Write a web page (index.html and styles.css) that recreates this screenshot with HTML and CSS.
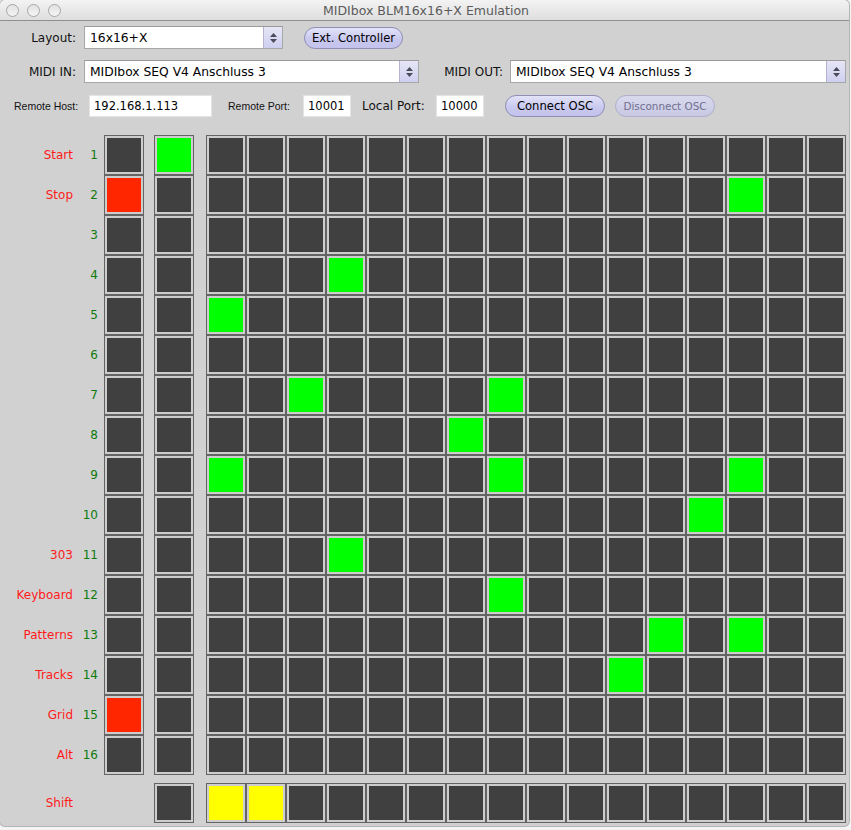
FILE: index.html
```html
<!DOCTYPE html>
<html>
<head>
<meta charset="utf-8">
<title>MIDIbox BLM16x16+X Emulation</title>
<link rel="stylesheet" href="styles.css">
</head>
<body>
<div class="window">
  <div class="titlebar">
    <div class="lights"><span class="light"></span><span class="light"></span><span class="light"></span></div>
    <div class="title">MIDIbox BLM16x16+X Emulation</div>
  </div>

  <div class="controls">
    <div class="row row1">
      <label class="lbl lbl-a">Layout:</label>
      <div class="select sel-layout"><span class="sel-text">16x16+X</span><span class="stepper"><svg width="9" height="12" viewBox="0 0 9 12"><path d="M4.5 1 L8 5 L1 5 Z" fill="#4a4a5a"/><path d="M4.5 11 L8 7 L1 7 Z" fill="#4a4a5a"/></svg></span></div>
      <button class="pill btn-ext">Ext. Controller</button>
    </div>
    <div class="row row2">
      <label class="lbl lbl-a">MIDI IN:</label>
      <div class="select sel-in"><span class="sel-text">MIDIbox SEQ V4 Anschluss 3</span><span class="stepper"><svg width="9" height="12" viewBox="0 0 9 12"><path d="M4.5 1 L8 5 L1 5 Z" fill="#4a4a5a"/><path d="M4.5 11 L8 7 L1 7 Z" fill="#4a4a5a"/></svg></span></div>
      <label class="lbl lbl-out">MIDI OUT:</label>
      <div class="select sel-out"><span class="sel-text">MIDIbox SEQ V4 Anschluss 3</span><span class="stepper"><svg width="9" height="12" viewBox="0 0 9 12"><path d="M4.5 1 L8 5 L1 5 Z" fill="#4a4a5a"/><path d="M4.5 11 L8 7 L1 7 Z" fill="#4a4a5a"/></svg></span></div>
    </div>
    <div class="row row3">
      <label class="small-lbl l-host">Remote Host:</label>
      <div class="field f-host">192.168.1.113</div>
      <label class="small-lbl l-rport">Remote Port:</label>
      <div class="field f-port">10001</div>
      <label class="lbl l-lport">Local Port:</label>
      <div class="field f-port">10000</div>
      <button class="pill btn-osc">Connect OSC</button>
      <button class="pill btn-osc disabled">Disconnect OSC</button>
    </div>
  </div>

  <div class="pad" id="pad"></div>
</div>
<script src="script.js"></script>
</body>
</html>
```

FILE: styles.css
```css
html, body {
  margin: 0;
  padding: 0;
  background: #f4f4f4;
}
body {
  width: 851px;
  height: 830px;
  overflow: hidden;
  font-family: "DejaVu Sans", "Noto Sans", sans-serif;
}
.window {
  width: 849px;
  height: 826px;
  background: #d1d1d1;
  border-radius: 5px 5px 5px 5px;
  box-shadow: 0 0 0 1px #b4b4b4;
  overflow: hidden;
}
.titlebar {
  height: 20px;
  border-bottom: 1px solid #8e8e8e;
  background: linear-gradient(#f3f3f3, #dedede);
  display: flex;
  align-items: center;
  position: relative;
}
.lights {
  display: flex;
  gap: 8px;
  padding-left: 6px;
}
.light {
  width: 11px;
  height: 11px;
  border-radius: 50%;
  border: 1px solid #a6a6a6;
  background: linear-gradient(#e2e2e2, #f4f4f4);
}
.title {
  flex: 1;
  text-align: center;
  font-size: 12.5px;
  color: #5a5a5a;
  margin-right: 58px;
  padding-top: 1px;
}

.controls {
  padding-top: 5px;
}
.row {
  display: flex;
  align-items: center;
}
.row1 { height: 23px; }
.row2 { height: 23px; margin-top: 11px; }
.row3 { height: 22px; margin-top: 12px; padding-left: 14px; }

.lbl {
  font-size: 12px;
  color: #111;
  white-space: nowrap;
}
.lbl-a {
  width: 76px;
  text-align: right;
  margin-right: 8px;
}
.lbl-out {
  width: 63px;
  text-align: right;
  margin-left: 21px;
  margin-right: 7px;
}
.select {
  height: 21px;
  background: #fff;
  border: 1px solid #a7a7a7;
  border-top-color: #9a9a9a;
  display: flex;
  align-items: center;
  box-sizing: content-box;
}
.sel-layout { width: 197px; }
.sel-in { width: 333px; }
.sel-out { width: 334px; }
.sel-text {
  flex: 1;
  padding-left: 5px;
  font-size: 12.3px;
  color: #000;
  white-space: nowrap;
}
.stepper {
  width: 18px;
  height: 21px;
  border-left: 1px solid #b3b3cf;
  background: linear-gradient(#e6e6f6, #cfcff0);
  display: flex;
  align-items: center;
  justify-content: center;
}

.pill {
  font-family: "DejaVu Sans", "Noto Sans", sans-serif;
  font-size: 11.6px;
  color: #000;
  height: 22px;
  border-radius: 11px;
  border: 1px solid #8e8eb6;
  background: linear-gradient(#e3e3f9, #c9c9ef 55%, #c2c2ec);
  padding: 0;
  text-align: center;
  box-sizing: border-box;
}
.btn-ext {
  width: 99px;
  margin-left: 21px;
  margin-top: 1px;
}
.btn-osc {
  width: 100px;
  margin-left: 10px;
}
.btn-osc:first-of-type { margin-left: 21px; }
.disabled {
  color: #6f6f8e;
  font-size: 10.4px;
  border-color: #afafcc;
  background: linear-gradient(#d9d9ee, #c8c8e4);
}

.small-lbl {
  font-family: "Liberation Sans", Arial, sans-serif;
  font-size: 10.5px;
  color: #111;
  white-space: nowrap;
}
.l-host { width: 64px; margin-right: 11px; }
.l-rport { width: 65px; margin-left: 16px; margin-right: 10px; }
.l-lport { width: 63px; margin-left: 11px; margin-right: 11px; }
.field {
  height: 22px;
  box-sizing: border-box;
  background: #fff;
  border: 1px solid #e4e4e4;
  font-size: 11.5px;
  line-height: 20px;
  padding-left: 4px;
  color: #000;
}
.f-host { width: 123px; }
.f-port { width: 48px; }

.pad {
  margin-top: 18px;
}
.prow {
  display: flex;
  height: 40px;
  align-items: center;
}
.prow.shift {
  margin-top: 8px;
}
.plabel {
  width: 73px;
  text-align: right;
  font-size: 12px;
  color: #ff1a1a;
  white-space: nowrap;
}
.pnum {
  width: 25px;
  text-align: right;
  font-size: 12px;
  color: #0d7a0d;
}
.cell {
  width: 40px;
  height: 40px;
  box-sizing: border-box;
  background: #404040;
  box-shadow: inset 0 0 0 1px #646464, inset 0 0 0 3px #cdcdcd;
  flex: none;
}
.cell.empty {
  background: none;
  box-shadow: none;
}
.c1 { margin-left: 6px; }
.c2 { margin-left: 10px; }
.main { margin-left: 12px; display: flex; }
.cell.g { background: #00ff00; }
.cell.r { background: #ff2600; }
.cell.y { background: #ffff00; }
```

FILE: script.js
```js
(function () {
  var labels = {1: "Start", 2: "Stop", 11: "303", 12: "Keyboard", 13: "Patterns", 14: "Tracks", 15: "Grid", 16: "Alt"};
  var col1 = {2: "r", 15: "r"};
  var col2 = {1: "g"};
  var greens = {2: [13], 4: [3], 5: [0], 7: [2, 7], 8: [6], 9: [0, 7, 13], 10: [12], 11: [3], 12: [7], 13: [11, 13], 14: [10]};
  var pad = document.getElementById("pad");
  function cell(cls) {
    var d = document.createElement("div");
    d.className = "cell" + (cls ? " " + cls : "");
    return d;
  }
  for (var r = 1; r <= 17; r++) {
    var row = document.createElement("div");
    row.className = "prow" + (r === 17 ? " shift" : "");
    var l = document.createElement("div");
    l.className = "plabel";
    l.textContent = r === 17 ? "Shift" : (labels[r] || "");
    row.appendChild(l);
    var n = document.createElement("div");
    n.className = "pnum";
    n.textContent = r === 17 ? "" : String(r);
    row.appendChild(n);
    var a = cell(r === 17 ? "empty" : (col1[r] || ""));
    a.classList.add("c1");
    row.appendChild(a);
    var b = cell(col2[r] || "");
    b.classList.add("c2");
    row.appendChild(b);
    var m = document.createElement("div");
    m.className = "main";
    for (var c = 0; c < 16; c++) {
      var cls = "";
      if (r === 17 && c < 2) cls = "y";
      else if (greens[r] && greens[r].indexOf(c) >= 0) cls = "g";
      m.appendChild(cell(cls));
    }
    row.appendChild(m);
    pad.appendChild(row);
  }
})();
```
